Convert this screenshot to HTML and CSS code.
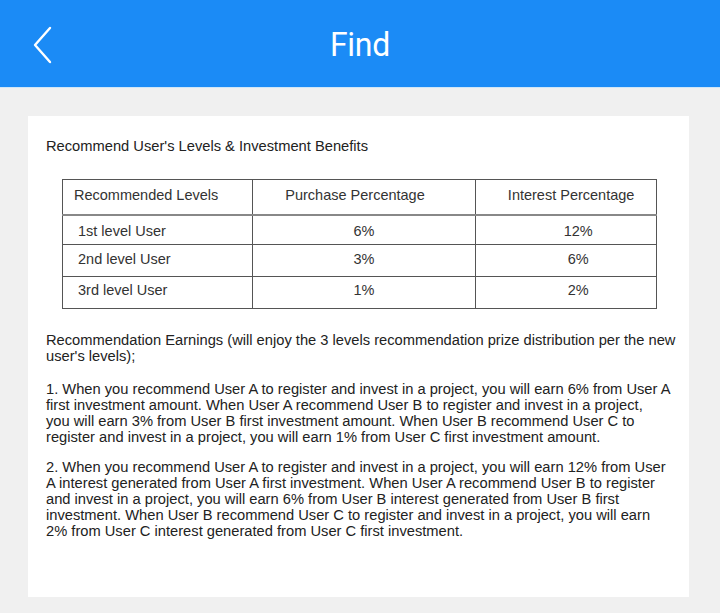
FILE: index.html
```html
<!DOCTYPE html>
<html>
<head>
<meta charset="utf-8">
<link rel="stylesheet" href="styles.css">
</head>
<body>
<header class="topbar">
  <button class="back" aria-label="Back">
    <svg width="24" height="40" viewBox="0 0 24 40"><path d="M19 3 L4 20 L19 37" fill="none" stroke="#fff" stroke-width="2.4" stroke-linecap="round" stroke-linejoin="round"/></svg>
  </button>
  <h1 class="title">Find</h1>
</header>
<main class="page">
  <section class="card">
    <h2 class="heading">Recommend User's Levels &amp; Investment Benefits</h2>
    <table class="levels">
      <thead>
        <tr><th class="c1">Recommended Levels</th><th class="c2">Purchase Percentage</th><th class="c3">Interest Percentage</th></tr>
      </thead>
      <tbody>
        <tr class="r1"><td class="c1">1st level User</td><td class="c2">6%</td><td class="c3">12%</td></tr>
        <tr class="r2"><td class="c1">2nd level User</td><td class="c2">3%</td><td class="c3">6%</td></tr>
        <tr class="r3"><td class="c1">3rd level User</td><td class="c2">1%</td><td class="c3">2%</td></tr>
      </tbody>
    </table>
    <p class="para p0">Recommendation Earnings (will enjoy the 3 levels recommendation prize distribution per the new<br>user's levels);</p>
    <p class="para p1">1. When you recommend User A to register and invest in a project, you will earn 6% from User A<br>first investment amount. When User A recommend User B to register and invest in a project,<br>you will earn 3% from User B first investment amount. When User B recommend User C to<br>register and invest in a project, you will earn 1% from User C first investment amount.</p>
    <p class="para p2">2. When you recommend User A to register and invest in a project, you will earn 12% from User<br>A interest generated from User A first investment. When User A recommend User B to register<br>and invest in a project, you will earn 6% from User B interest generated from User B first<br>investment. When User B recommend User C to register and invest in a project, you will earn<br>2% from User C interest generated from User C first investment.</p>
  </section>
</main>
</body>
</html>
```
FILE: styles.css
```css
* { box-sizing: border-box; }
html, body { margin: 0; padding: 0; }
body {
  background: #f0f0f0;
  font-family: "Liberation Sans", Arial, sans-serif;
  color: #333;
  width: 720px;
  height: 613px;
  overflow: hidden;
}
.topbar {
  height: 88px;
  background: #1b8bf6;
  display: flex;
  align-items: center;
  justify-content: center;
  position: relative;
  border-bottom: 1px solid #cfe6f8;
}
.back {
  position: absolute;
  left: 31px;
  top: 25px;
  background: none;
  border: 0;
  padding: 0;
  width: 24px;
  height: 40px;
}
.back svg { display: block; }
.title {
  margin: 0;
  font-family: Roboto, "Noto Sans", sans-serif;
  font-weight: 400;
  font-size: 34px;
  color: #fff;
  letter-spacing: -0.3px;
  transform: scaleX(0.94);
}
.page {
  padding: 28px 31px 0 28px;
}
.card {
  background: #fff;
  height: 481px;
  padding: 22px 10px 0 18px;
}
.heading {
  margin: 0;
  font-size: 14.7px;
  font-weight: 400;
  line-height: 16px;
  color: #222;
}
.levels {
  margin: 25px 0 0 16px;
  border-collapse: collapse;
  width: 595px;
  font-size: 14.5px;
  color: #333;
}
.levels th, .levels td {
  border: 1px solid #555;
  font-weight: 400;
  padding: 0;
}
.levels th { height: 35px; padding-bottom: 4px; }
.levels thead th { border-bottom: 2px solid #888; }
.r1 td { height: 30px; padding-top: 3px; }
.r2 td { height: 32px; padding-bottom: 3px; }
.r3 td { height: 32px; padding-bottom: 6px; }
.c1 { width: 190px; text-align: left; }
.c2 { width: 224px; text-align: center; }
.c3 { width: 181px; text-align: center; }
th.c1 { padding-left: 11px; }
td.c1 { padding-left: 15px; }
th.c2 { padding-right: 18px; }
td.c3 { padding-left: 24px; }
th.c3 { padding-left: 10px; }
.para {
  margin: 14px 0 0;
  font-size: 14.7px;
  line-height: 16px;
  color: #222;
  white-space: nowrap;
}
.para.p0 { margin-top: 23px; }
.para.p1 { margin-top: 17px; }
.para.p2 { margin-top: 14px; }
```
